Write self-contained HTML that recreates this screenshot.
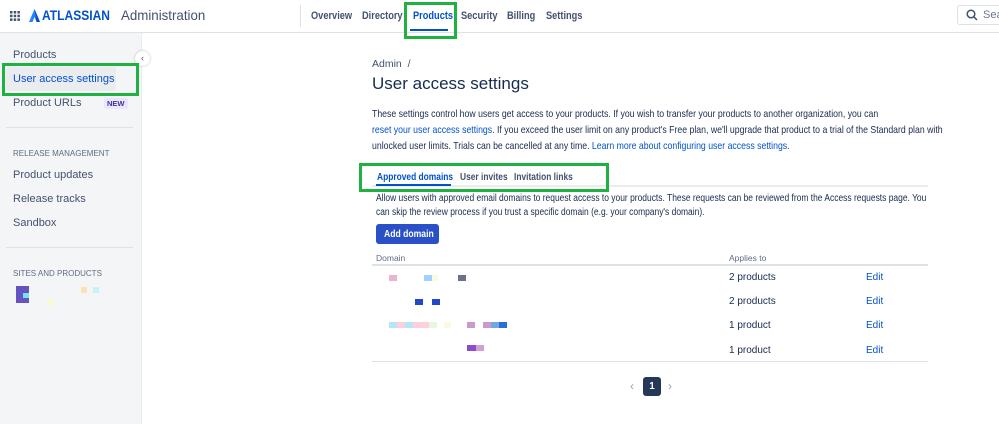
<!DOCTYPE html>
<html><head><style>
*{margin:0;padding:0;box-sizing:border-box}
body{width:999px;height:424px;overflow:hidden;font-family:"Liberation Sans",sans-serif;color:#172b4d;background:#fff;position:relative;font-size:11px}
.a{position:absolute;white-space:nowrap;transform-origin:0 0}
.nav{font-size:11px;font-weight:bold;color:#42526e;top:10px;transform:scaleX(0.84)}
.sb{font-size:11px;color:#42526e;left:13px}
.hd{font-size:8px;color:#5e6c84;left:13px}
.p{font-size:10.5px;color:#172b4d;left:372px;transform:scaleX(0.83)}
.tb{font-size:10.5px;font-weight:bold;top:171px;transform:scaleX(0.8)}
.lk{color:#0052cc}
.px{position:absolute;height:6px}
.g{position:absolute;border:3px solid #1fb141}
</style></head><body>
<div class="a" style="left:0;top:32px;width:999px;height:1px;background:#dfe1e6"></div>
<svg class="a" style="left:10px;top:11px" width="10" height="10"><g fill="#42526e"><rect x="0" y="0" width="2.5" height="2.5"/><rect x="3.7" y="0" width="2.5" height="2.5"/><rect x="7.4" y="0" width="2.5" height="2.5"/><rect x="0" y="3.7" width="2.5" height="2.5"/><rect x="3.7" y="3.7" width="2.5" height="2.5"/><rect x="7.4" y="3.7" width="2.5" height="2.5"/><rect x="0" y="7.4" width="2.5" height="2.5"/><rect x="3.7" y="7.4" width="2.5" height="2.5"/><rect x="7.4" y="7.4" width="2.5" height="2.5"/></g></svg>
<svg class="a" style="left:29px;top:9px" width="11" height="13"><path d="M5.5 0 L11 13 H7.5 L5.5 8 L3.5 13 H0 Z" fill="#2684ff"/><path d="M5.5 0 L11 13 H7.5 Z" fill="#0052cc"/></svg>
<div class="a" style="left:42px;top:7px;font-size:14px;font-weight:bold;color:#0052cc;transform:scaleX(0.86)">ATLASSIAN</div>
<div class="a" style="left:121px;top:7px;font-size:14px;color:#42526e;transform:scaleX(0.95)">Administration</div>
<div class="a" style="left:300px;top:5px;width:1px;height:22px;background:#dfe1e6"></div>
<div class="a nav" style="left:311px">Overview</div>
<div class="a nav" style="left:362px">Directory</div>
<div class="a nav" style="left:413px;color:#0052cc">Products</div>
<div class="a" style="left:410px;top:29px;width:38px;height:2px;background:#0052cc"></div>
<div class="a nav" style="left:461px">Security</div>
<div class="a nav" style="left:507px">Billing</div>
<div class="a nav" style="left:546px">Settings</div>
<div class="g" style="left:404px;top:2px;width:53px;height:37px"></div>
<div class="a" style="left:957px;top:5px;width:50px;height:20px;border:1px solid #dfe1e6;border-radius:3px"></div>
<svg class="a" style="left:966px;top:9px" width="12" height="12"><circle cx="5" cy="5" r="3.8" fill="none" stroke="#42526e" stroke-width="1.5"/><path d="M8 8 L11 11" stroke="#42526e" stroke-width="1.5"/></svg>
<div class="a" style="left:983px;top:9px;font-size:11px;color:#6b778c">Sear</div>

<div class="a" style="left:0;top:33px;width:142px;height:391px;background:#f4f5f7;border-right:1px solid #ebecf0"></div>
<div class="a" style="left:135px;top:51px;width:15px;height:15px;border-radius:50%;background:#fff;box-shadow:0 0 2px rgba(0,0,0,.3);font-size:9px;text-align:center;line-height:15px;color:#42526e">‹</div>
<div class="a sb" style="top:49px">Products</div>
<div class="a" style="left:6px;top:67px;width:110px;height:24px;background:#ebecf0;border-radius:3px"></div>
<div class="a sb" style="top:73px;color:#0052cc">User access settings</div>
<div class="g" style="left:2px;top:63px;width:137px;height:33px"></div>
<div class="a sb" style="top:97px">Product URLs</div>
<div class="a" style="left:104px;top:98px;font-size:7.5px;font-weight:bold;color:#403294;background:#eae6ff;padding:1px 3px;border-radius:2px">NEW</div>
<div class="a" style="left:6px;top:127px;width:127px;height:1px;background:#dfe1e6"></div>
<div class="a hd" style="top:149px">RELEASE MANAGEMENT</div>
<div class="a sb" style="top:169px">Product updates</div>
<div class="a sb" style="top:193px">Release tracks</div>
<div class="a sb" style="top:217px">Sandbox</div>
<div class="a" style="left:6px;top:247px;width:127px;height:1px;background:#dfe1e6"></div>
<div class="a hd" style="top:269px">SITES AND PRODUCTS</div>
<div class="a" style="left:16px;top:286px;width:13px;height:17px;background:#6554c0"></div>
<div class="a" style="left:23px;top:293px;width:6px;height:5px;background:#79e2f2"></div>
<div class="px" style="left:81px;top:287px;width:6px;background:#f8e2b6"></div>
<div class="px" style="left:93px;top:287px;width:6px;background:#c6f3f7"></div>
<div class="px" style="left:48px;top:299px;width:6px;background:#fafad2"></div>

<div class="a" style="left:372px;top:58px;font-size:10.5px;color:#42526e">Admin&nbsp; /</div>
<div class="a" style="left:372px;top:74px;font-size:17px;color:#172b4d">User access settings</div>
<div class="a p" style="top:108px">These settings control how users get access to your products. If you wish to transfer your products to another organization, you can</div>
<div class="a p" style="top:124px"><span class="lk">reset your user access settings</span>. If you exceed the user limit on any product's Free plan, we'll upgrade that product to a trial of the Standard plan with</div>
<div class="a p" style="top:140px">unlocked user limits. Trials can be cancelled at any time. <span class="lk">Learn more about configuring user access settings</span>.</div>

<div class="a" style="left:372px;top:185px;width:556px;height:2px;background:#ebecf0"></div>
<div class="a tb" style="left:377px;color:#0052cc">Approved domains</div>
<div class="a" style="left:376px;top:184px;width:75px;height:2px;background:#0052cc"></div>
<div class="a tb" style="left:460px;color:#42526e">User invites</div>
<div class="a tb" style="left:514px;color:#42526e">Invitation links</div>
<div class="g" style="left:359px;top:163px;width:250px;height:29px"></div>

<div class="a" style="left:376px;top:193px;font-size:10px;color:#172b4d;transform:scaleX(0.845)">Allow users with approved email domains to request access to your products. These requests can be reviewed from the Access requests page. You</div>
<div class="a" style="left:376px;top:207px;font-size:10px;color:#172b4d;transform:scaleX(0.845)">can skip the review process if you trust a specific domain (e.g. your company's domain).</div>
<div class="a" style="left:376px;top:224px;width:63px;height:20px;background:#2a50c8;border-radius:3px"></div>
<div class="a" style="left:384px;top:228px;color:#fff;font-weight:bold;font-size:10.5px;transform:scaleX(0.82)">Add domain</div>
<div class="a" style="left:376px;top:253px;font-size:8.5px;color:#5e6c84">Domain</div>
<div class="a" style="left:729px;top:253px;font-size:8.5px;color:#5e6c84">Applies to</div>
<div class="a" style="left:372px;top:264px;width:556px;height:2px;background:#dfe1e6"></div>

<div class="a" style="left:729px;top:272px;font-size:10px">2 products</div><div class="a lk" style="left:866px;top:272px;font-size:10px">Edit</div>
<div class="a" style="left:729px;top:296px;font-size:10px">2 products</div><div class="a lk" style="left:866px;top:296px;font-size:10px">Edit</div>
<div class="a" style="left:729px;top:320px;font-size:10px">1 product</div><div class="a lk" style="left:866px;top:320px;font-size:10px">Edit</div>
<div class="a" style="left:729px;top:345px;font-size:10px">1 product</div><div class="a lk" style="left:866px;top:345px;font-size:10px">Edit</div>

<div class="px" style="left:389px;top:275px;width:8px;background:#e8b4cf"></div>
<div class="px" style="left:424px;top:275px;width:8px;background:#9fd0ff"></div>
<div class="px" style="left:432px;top:275px;width:6px;background:#fafae0"></div>
<div class="px" style="left:458px;top:275px;width:8px;background:#6b7388"></div>
<div class="px" style="left:415px;top:299px;width:8px;background:#2446c8"></div>
<div class="px" style="left:432px;top:299px;width:8px;background:#2446c8"></div>
<div class="px" style="left:389px;top:322px;width:16px;background:#b3e5fc"></div>
<div class="px" style="left:397px;top:322px;width:8px;background:#ffd0dc"></div>
<div class="px" style="left:405px;top:322px;width:8px;background:#b3e5fc"></div>
<div class="px" style="left:413px;top:322px;width:16px;background:#ffd0dc"></div>
<div class="px" style="left:429px;top:322px;width:8px;background:#e6f7e0"></div>
<div class="px" style="left:444px;top:322px;width:7px;background:#fafae0"></div>
<div class="px" style="left:467px;top:322px;width:8px;background:#cc99cc"></div>
<div class="px" style="left:483px;top:322px;width:8px;background:#cc99cc"></div>
<div class="px" style="left:491px;top:322px;width:8px;background:#6fa9e0"></div>
<div class="px" style="left:499px;top:322px;width:8px;background:#2a6fd8"></div>
<div class="px" style="left:467px;top:345px;width:9px;background:#8a4cc8"></div>
<div class="px" style="left:476px;top:345px;width:8px;background:#d4a0d4"></div>

<div class="a" style="left:372px;top:361px;width:556px;height:1px;background:#dfe1e6"></div>
<div class="a" style="left:630px;top:379px;font-size:12px;color:#97a0af">‹</div>
<div class="a" style="left:643px;top:377px;width:18px;height:19px;background:#253858;border-radius:3px;color:#fff;font-weight:bold;font-size:10px;text-align:center;line-height:19px">1</div>
<div class="a" style="left:668px;top:379px;font-size:12px;color:#97a0af">›</div>
</body></html>
